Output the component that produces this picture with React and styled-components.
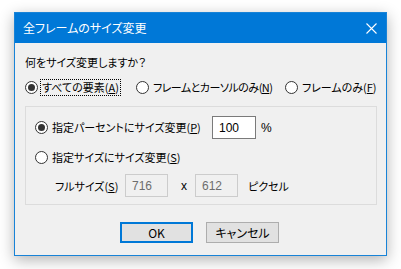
import React from 'react';
import styled, { createGlobalStyle } from 'styled-components';

const GlobalStyle = createGlobalStyle`
  html, body {
    margin: 0;
    padding: 0;
    background: #ffffff;
  }
  body {
    font-family: "Noto Sans CJK JP", "Noto Sans", sans-serif;
    font-size: 11px;
    color: #000;
    font-feature-settings: "palt";
  }
`;

const Page = styled.div`
  width: 401px;
  height: 269px;
  padding: 12px 0 0 14px;
  box-sizing: border-box;
  overflow: hidden;
`;

const Window = styled.div`
  width: 373px;
  height: 244px;
  box-sizing: border-box;
  border: 1px solid #1883d7;
  background: #f0f0f0;
  box-shadow: 0 4px 14px rgba(0, 0, 0, 0.3);
  display: flex;
  flex-direction: column;
`;

const TitleBar = styled.div`
  height: 30px;
  background: #0078d7;
  color: #fff;
  display: flex;
  align-items: center;
  justify-content: space-between;
  padding: 0 9px 0 8px;
  font-size: 12px;
  line-height: 16px;
`;

const Body = styled.div`
  flex: 1;
  padding: 11px 10px 0 10px;
  display: flex;
  flex-direction: column;
  white-space: nowrap;
`;

const Question = styled.div`
  line-height: 16px;
  height: 16px;
`;

const RadioRow = styled.div`
  display: flex;
  align-items: center;
  height: 16px;
  margin-top: 9px;
`;

const Option = styled.label`
  display: flex;
  align-items: center;
  gap: 3px;
  width: ${(p) => (p.$w ? `${p.$w}px` : 'auto')};
  flex-shrink: 0;
  line-height: 15px;
`;

const Circle = styled.span`
  width: 11px;
  height: 11px;
  border: 1px solid #333;
  border-radius: 50%;
  background: #fff;
  display: flex;
  align-items: center;
  justify-content: center;
  flex-shrink: 0;
  &::after {
    content: '';
    width: 7px;
    height: 7px;
    border-radius: 50%;
    background: #333;
    display: ${(p) => (p.$checked ? 'block' : 'none')};
  }
`;

const Text = styled.span`
  padding: 0 1px;
  letter-spacing: ${(p) => (p.$tight ? '-0.5px' : 'normal')};
  outline: ${(p) => (p.$focus ? '1px dotted #000' : 'none')};
`;

const GroupBox = styled.div`
  margin-top: 11px;
  width: 352px;
  border: 1px solid #dcdcdc;
  box-sizing: border-box;
  padding: 9px 9px 7px 9px;
  display: flex;
  flex-direction: column;
`;

const Row = styled.div`
  display: flex;
  align-items: center;
  height: ${(p) => p.$h || 16}px;
  margin-top: ${(p) => p.$mt || 0}px;
  padding-left: ${(p) => p.$indent || 0}px;
`;

const Label = styled.span`
  width: ${(p) => p.$w}px;
  flex-shrink: 0;
`;

const Field = styled.div`
  box-sizing: border-box;
  width: ${(p) => p.$w}px;
  height: 23px;
  border: 1px solid ${(p) => (p.$disabled ? '#cccccc' : '#7a7a7a')};
  background: ${(p) => (p.$disabled ? '#f0f0f0' : '#fff')};
  color: ${(p) => (p.$disabled ? '#6d6d6d' : '#000')};
  font-family: "Liberation Sans", Arial, sans-serif;
  font-size: 12px;
  display: flex;
  align-items: center;
  padding-left: 6px;
  flex-shrink: 0;
`;

const Unit = styled.span`
  width: ${(p) => (p.$w ? `${p.$w}px` : 'auto')};
  padding-left: ${(p) => p.$pl || 0}px;
  box-sizing: border-box;
  flex-shrink: 0;
  font-family: ${(p) => (p.$latin ? '"Liberation Sans", Arial, sans-serif' : 'inherit')};
  font-size: ${(p) => (p.$latin ? '12px' : 'inherit')};
`;

const Buttons = styled.div`
  display: flex;
  justify-content: center;
  gap: 13px;
  margin-top: 17px;
  padding-right: 2px;
`;

const Button = styled.div`
  box-sizing: border-box;
  width: 73px;
  height: 21px;
  background: #e1e1e1;
  border: ${(p) => (p.$default ? '2px solid #0078d7' : '1px solid #adadad')};
  display: flex;
  align-items: center;
  justify-content: center;
  line-height: 15px;
  font-size: 12px;
`;

const CloseIcon = () => (
  <svg width="11" height="11" viewBox="0 0 11 11">
    <path d="M0.5 0.5 L10.5 10.5 M10.5 0.5 L0.5 10.5" stroke="#fff" strokeWidth="1.1" />
  </svg>
);

export default function App() {
  return (
    <>
      <GlobalStyle />
      <Page>
        <Window>
          <TitleBar>
            <span>全フレームのサイズ変更</span>
            <CloseIcon />
          </TitleBar>
          <Body>
            <Question>何をサイズ変更しますか？</Question>
            <RadioRow>
              <Option $w={111}>
                <Circle $checked />
                <Text $focus>すべての要素(<u>A</u>)</Text>
              </Option>
              <Option $w={149}>
                <Circle />
                <Text $tight>フレームとカーソルのみ(<u>N</u>)</Text>
              </Option>
              <Option>
                <Circle />
                <Text>フレームのみ(<u>F</u>)</Text>
              </Option>
            </RadioRow>
            <GroupBox>
              <Row $h={23}>
                <Option $w={177}>
                  <Circle $checked />
                  <Text>指定パーセントにサイズ変更(<u>P</u>)</Text>
                </Option>
                <Field $w={44}>100</Field>
                <Unit $pl={5} $latin>%</Unit>
              </Row>
              <Row $mt={10}>
                <Option>
                  <Circle />
                  <Text>指定サイズにサイズ変更(<u>S</u>)</Text>
                </Option>
              </Row>
              <Row $h={23} $mt={9} $indent={20}>
                <Label $w={70}>フルサイズ(<u>S</u>)</Label>
                <Field $w={43} $disabled>716</Field>
                <Unit $w={27} $pl={13} $latin>x</Unit>
                <Field $w={43} $disabled>612</Field>
                <Unit $pl={10}>ピクセル</Unit>
              </Row>
            </GroupBox>
            <Buttons>
              <Button $default>OK</Button>
              <Button>キャンセル</Button>
            </Buttons>
          </Body>
        </Window>
      </Page>
    </>
  );
}
